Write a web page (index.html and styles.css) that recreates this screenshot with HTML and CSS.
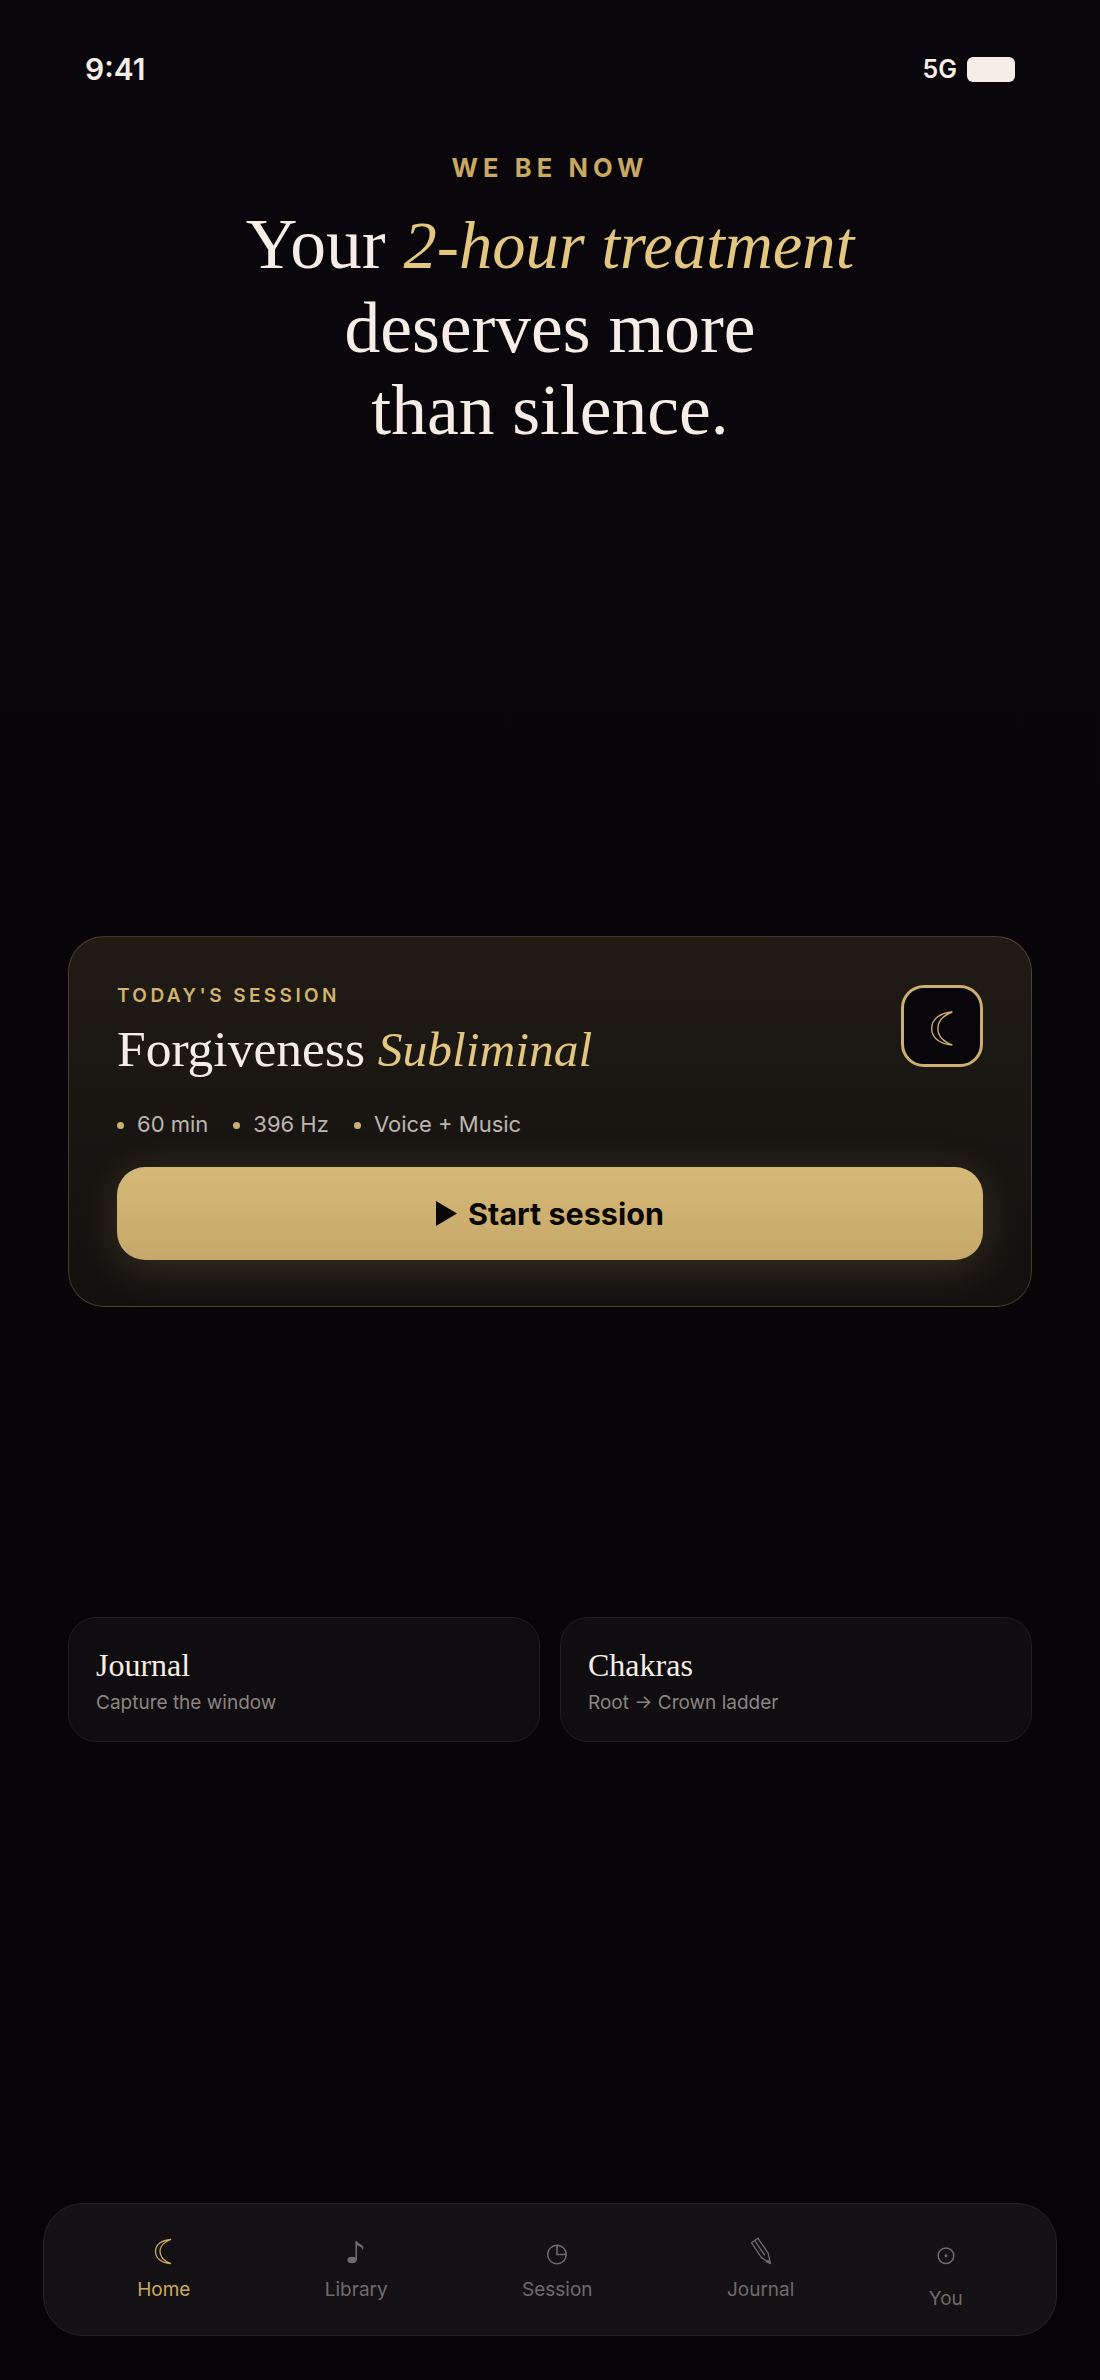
FILE: index.html
```html
<!DOCTYPE html>
<html lang="en">
<head>
    <meta charset="UTF-8">
    <meta name="viewport" content="width=device-width, initial-scale=1.0">
    <title>We Be Now</title>
    <link rel="stylesheet" href="styles.css">
</head>
<body>
    <div class="status">
        <span class="time">9:41</span>
        <div class="status-right">
            <span class="network">5G</span>
            <span class="battery"></span>
        </div>
    </div>

    <header class="hero">
        <div class="eyebrow">WE BE NOW</div>
        <h1>Your <em>2-hour treatment</em><br>deserves more<br>than silence.</h1>
    </header>

    <section class="session">
        <div class="session-top">
            <div>
                <div class="session-label">TODAY'S SESSION</div>
                <h2>Forgiveness <em>Subliminal</em></h2>
            </div>
            <div class="session-icon">
                <svg width="22" height="35" viewBox="0 0 16 25" fill="none" stroke="currentColor" stroke-width="1">
                    <path d="M15.5 .5C6 1.2 .5 6 .5 12.5S6 23.8 15.5 24.5C9 22 5 18 5 12.5S9 3 15.5 .5Z"/>
                </svg>
            </div>
        </div>
        <ul class="session-meta">
            <li>60 min</li>
            <li>396 Hz</li>
            <li>Voice + Music</li>
        </ul>
        <button class="start" type="button">
            <svg width="21" height="25" viewBox="0 0 21 25"><path d="M0 0L21 12.5L0 25Z" fill="currentColor"/></svg>
            Start session
        </button>
    </section>

    <section class="links">
        <div class="link-card">
            <h3>Journal</h3>
            <p>Capture the window</p>
        </div>
        <div class="link-card">
            <h3>Chakras</h3>
            <p>Root → Crown ladder</p>
        </div>
    </section>

    <nav class="tabs">
        <div class="tab active">
            <svg width="48" height="48" viewBox="0 0 48 48" fill="none" stroke="currentColor" stroke-width="1.3">
                <path d="M31 14.5C21 15.2 15.5 20 15.5 26.5S21 38 31 38.7C24 36 20 32 20 26.5S24 17 31 14.5Z"/>
            </svg>
            <span>Home</span>
        </div>
        <div class="tab">
            <svg width="48" height="48" viewBox="0 0 48 48" fill="currentColor">
                <ellipse cx="20" cy="35" rx="4.6" ry="3.2"/>
                <path d="M23.4 35V16h1.6C25.5 19 31.5 19.5 31.6 22.5C31.6 23.5 31 24.5 30.5 25C30.5 22.5 27.5 21 25 20.5V35Z"/>
            </svg>
            <span>Library</span>
        </div>
        <div class="tab">
            <svg width="48" height="48" viewBox="0 0 48 48" fill="none" stroke="currentColor" stroke-width="1.5">
                <circle cx="24" cy="29.5" r="9.3"/>
                <path d="M24 20.2V29.5H33.3"/>
            </svg>
            <span>Session</span>
        </div>
        <div class="tab">
            <svg width="48" height="48" viewBox="0 0 48 48" fill="none" stroke="currentColor" stroke-width="1.3" stroke-linejoin="round">
                <path d="M14.4 17.7L21 13.3L31.1 28.2L33.5 38.5L24.5 32.6Z"/>
                <path d="M17.7 15.5L27.8 30.4"/>
                <path d="M31 35.5L33.5 38.5L29.5 36.8Z" fill="currentColor"/>
            </svg>
            <span>Journal</span>
        </div>
        <div class="tab tab-low">
            <svg width="48" height="48" viewBox="0 0 48 48" fill="none" stroke="currentColor" stroke-width="1.5">
                <circle cx="24" cy="30.7" r="7.8"/>
                <circle cx="24" cy="30.7" r="1.5" fill="currentColor" stroke="none"/>
            </svg>
            <span>You</span>
        </div>
    </nav>
</body>
</html>
```

FILE: styles.css
```css
* {
    box-sizing: border-box;
}
html, body {
    margin: 0;
    padding: 0;
}
body {
    width: 1100px;
    height: 2380px;
    overflow: hidden;
    padding: 0 43px;
    background: linear-gradient(180deg, #09070b 0%, #050306 100%);
    color: #f6ede6;
    font-family: Inter, "Liberation Sans", sans-serif;
}
h1, h2, h3, p, ul {
    margin: 0;
    padding: 0;
}
em {
    font-style: italic;
    color: #e3c67f;
}

.status {
    display: flex;
    justify-content: space-between;
    align-items: center;
    height: 28px;
    margin-top: 55px;
    padding: 0 42px;
}
.time {
    font-size: 30px;
    font-weight: 600;
}
.status-right {
    display: flex;
    align-items: center;
    gap: 10px;
}
.network {
    font-size: 25px;
    font-weight: 600;
}
.battery {
    width: 48px;
    height: 25px;
    border-radius: 6px;
    background: #f6ede6;
}

.hero {
    margin-top: 70px;
    text-align: center;
}
.eyebrow {
    font-size: 25.5px;
    line-height: 30px;
    font-weight: 700;
    letter-spacing: 0.2em;
    color: #c9a961;
}
h1 {
    margin-top: 20px;
    font-family: "Liberation Serif", serif;
    font-size: 71.5px;
    line-height: 82px;
    font-weight: 400;
}
h1 em {
    font-size: 66.6px;
}

.session {
    margin: 485px 25px 0;
    height: 371px;
    padding: 48px;
    border: 1px solid rgba(201, 169, 97, 0.28);
    border-radius: 36px;
    background: linear-gradient(180deg, #201b15 0%, #12100f 100%);
}
.session-top {
    display: flex;
    justify-content: space-between;
    align-items: flex-start;
}
.session-label {
    font-size: 19px;
    line-height: 22px;
    font-weight: 600;
    letter-spacing: 0.18em;
    color: #d2b36f;
}
h2 {
    margin-top: 11px;
    font-family: "Liberation Serif", serif;
    font-size: 51.5px;
    line-height: 62px;
    font-weight: 400;
}
h2 em {
    font-size: 49.5px;
}
.session-icon {
    display: flex;
    align-items: center;
    justify-content: center;
    width: 82px;
    height: 82px;
    padding-top: 4px;
    border: 3px solid #cdb06e;
    border-radius: 23px;
    background: #08060a;
    color: #cdb06e;
}
.session-meta {
    display: flex;
    gap: 25px;
    margin-top: 28px;
    list-style: none;
    font-size: 22px;
    line-height: 30px;
    color: #bdb6b0;
}
.session-meta li::before {
    content: "";
    display: inline-block;
    width: 7px;
    height: 7px;
    margin: 0 13px 3px 0;
    border-radius: 50%;
    background: #cdb06e;
}
.start {
    display: flex;
    align-items: center;
    justify-content: center;
    gap: 11px;
    width: 100%;
    height: 93px;
    margin-top: 28px;
    border: none;
    border-radius: 28px;
    background: linear-gradient(180deg, #d6b878 0%, #c6a96a 100%);
    box-shadow: 0 8px 44px rgba(212, 178, 110, 0.2);
    color: #0a0806;
    font-family: Inter, "Liberation Sans", sans-serif;
    font-size: 30.5px;
    font-weight: 700;
}

.links {
    display: grid;
    grid-template-columns: 1fr 1fr;
    gap: 20px;
    margin: 310px 25px 0;
}
.link-card {
    height: 125px;
    padding: 28px 27px;
    border: 1px solid #211f22;
    border-radius: 28px;
    background: #100d10;
}
h3 {
    font-family: "Liberation Serif", serif;
    font-size: 32px;
    line-height: 38px;
    font-weight: 400;
}
.link-card p {
    margin-top: 7px;
    font-size: 19px;
    line-height: 24px;
    color: #8a8582;
}

.tabs {
    display: flex;
    justify-content: space-around;
    align-items: flex-start;
    height: 133px;
    margin-top: 461px;
    padding: 21px 26px 0;
    border: 1px solid #242226;
    border-radius: 40px;
    background: #131114;
}
.tab {
    display: flex;
    flex-direction: column;
    align-items: center;
    gap: 5px;
    font-size: 19px;
    line-height: 24px;
    color: #6f6b6b;
}
/* icon box is wider than the short labels, don't let it push the spacing */
.tab svg {
    margin: 0 -24px;
}
.tab.active {
    color: #c9a961;
}
.tab-low {
    gap: 14px;
}
```
